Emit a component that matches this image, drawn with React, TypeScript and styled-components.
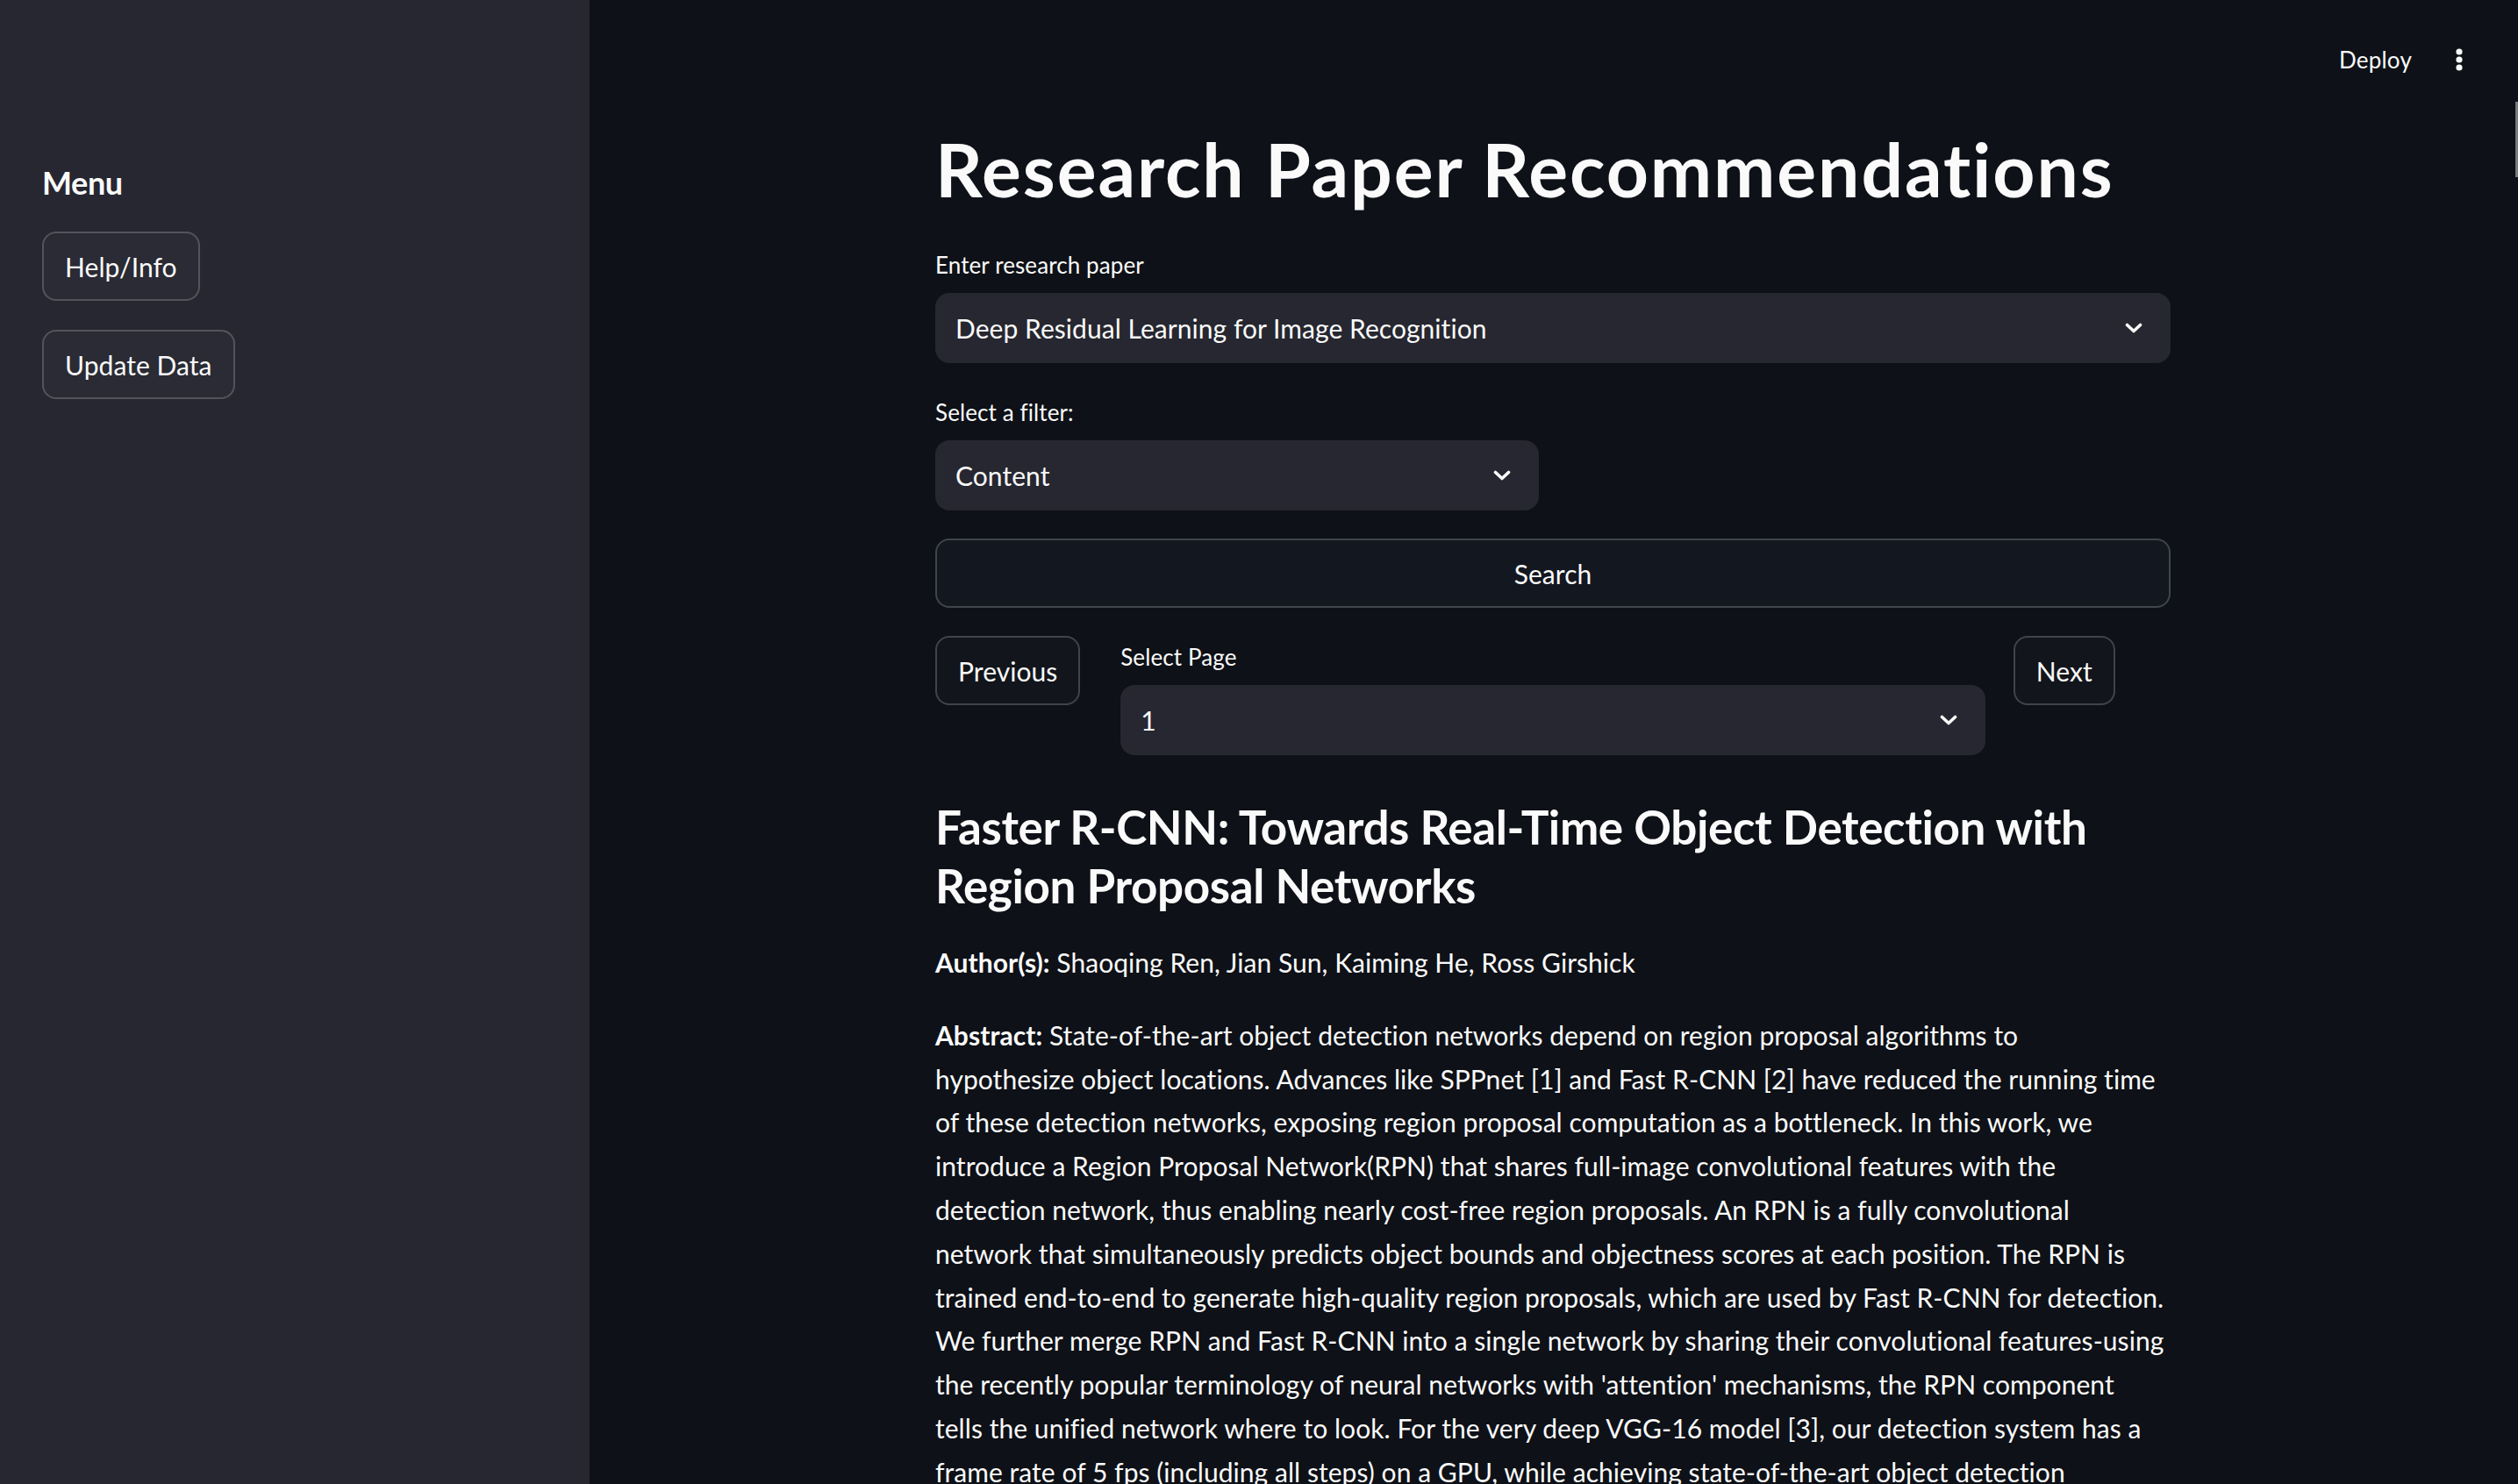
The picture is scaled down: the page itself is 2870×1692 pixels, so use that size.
import React from "react";
import styled, { createGlobalStyle } from "styled-components";

const GlobalStyle = createGlobalStyle`
  * { box-sizing: border-box; }
  html, body { margin: 0; padding: 0; background: #0e1117; }
  body {
    font-family: Lato, "Noto Sans", sans-serif;
    color: #fafafa;
    -webkit-font-smoothing: antialiased;
  }
`;

const abstractLines = [
  "hypothesize object locations. Advances like SPPnet [1] and Fast R-CNN [2] have reduced the running time",
  "of these detection networks, exposing region proposal computation as a bottleneck. In this work, we",
  "introduce a Region Proposal Network(RPN) that shares full-image convolutional features with the",
  "detection network, thus enabling nearly cost-free region proposals. An RPN is a fully convolutional",
  "network that simultaneously predicts object bounds and objectness scores at each position. The RPN is",
  "trained end-to-end to generate high-quality region proposals, which are used by Fast R-CNN for detection.",
  "We further merge RPN and Fast R-CNN into a single network by sharing their convolutional features-using",
  "the recently popular terminology of neural networks with 'attention' mechanisms, the RPN component",
  "tells the unified network where to look. For the very deep VGG-16 model [3], our detection system has a",
  "frame rate of 5 fps (including all steps) on a GPU, while achieving state-of-the-art object detection",
  "accuracy on PASCAL VOC 2007, 2012, and MS COCO datasets with only 300 proposals per image. In ILSVRC",
  "and COCO 2015 competitions, Faster R-CNN and RPN are the foundations of the 1st-place winning entries",
  "in several tracks. Code has been made publicly available.",
];

const Chevron = () => (
  <svg width="20" height="12" viewBox="0 0 20 12" fill="none">
    <polyline
      points="2.5,2.5 10,9.5 17.5,2.5"
      stroke="#fafafa"
      strokeWidth="3.6"
      strokeLinecap="round"
      strokeLinejoin="round"
    />
  </svg>
);

const MoreIcon = () => (
  <svg width="8" height="26" viewBox="0 0 8 26" fill="#fafafa">
    <circle cx="4" cy="4" r="3.6" />
    <circle cx="4" cy="13" r="3.6" />
    <circle cx="4" cy="22" r="3.6" />
  </svg>
);

type SelectProps = { label: string; value: string };

const SelectBox: React.FC<SelectProps> = ({ label, value }) => (
  <Field>
    <FieldLabel>{label}</FieldLabel>
    <Select>
      <span>{value}</span>
      <Chevron />
    </Select>
  </Field>
);

export default function App() {
  return (
    <>
      <GlobalStyle />
      <AppShell>
        <Sidebar>
          <SidebarTitle>Menu</SidebarTitle>
          <Button>Help/Info</Button>
          <Button>Update Data</Button>
        </Sidebar>

        <Main>
          <Header>
            <DeployButton>Deploy</DeployButton>
            <IconButton>
              <MoreIcon />
            </IconButton>
          </Header>

          <Content>
            <Title>Research Paper Recommendations</Title>

            <SelectBox label="Enter research paper" value="Deep Residual Learning for Image Recognition" />

            <Columns>
              <SelectBox label="Select a filter:" value="Content" />
              <div />
            </Columns>

            <Button $wide>Search</Button>

            <Pager>
              <Button>Previous</Button>
              <SelectBox label="Select Page" value="1" />
              <Button>Next</Button>
            </Pager>

            <Paper>
              <PaperTitle>
                Faster R-CNN: Towards Real-Time Object Detection with Region Proposal Networks
              </PaperTitle>
              <Text>
                <strong>Author(s):</strong> Shaoqing Ren, Jian Sun, Kaiming He, Ross Girshick
              </Text>
              <Text>
                <strong>Abstract:</strong> State-of-the-art object detection networks depend on region
                proposal algorithms to
                {abstractLines.map((line) => (
                  <React.Fragment key={line}>
                    <br />
                    {line}
                  </React.Fragment>
                ))}
              </Text>
            </Paper>
          </Content>
          <ScrollThumb />
        </Main>
      </AppShell>
    </>
  );
}

const AppShell = styled.div`
  display: flex;
  height: 100vh;
  overflow: hidden;
  background: #0e1117;
`;

const Sidebar = styled.aside`
  width: 672px;
  flex-shrink: 0;
  background: #262730;
  padding: 184px 48px 0;
  display: flex;
  flex-direction: column;
  align-items: flex-start;
  gap: 33px;
`;

const SidebarTitle = styled.h2`
  margin: 0 0 -1px;
  font-size: 36px;
  font-weight: 700;
  line-height: 48px;
  letter-spacing: -0.4px;
`;

const Button = styled.button<{ $wide?: boolean }>`
  display: inline-flex;
  align-items: center;
  justify-content: center;
  height: 79px;
  width: ${(p) => (p.$wide ? "100%" : "auto")};
  padding: 0 24px;
  border: 2px solid rgba(250, 250, 250, 0.2);
  border-radius: 16px;
  background: ${(p) => (p.$wide ? "#131720" : "rgba(250, 250, 250, 0.02)")};
  color: #fafafa;
  font-family: inherit;
  font-size: 30px;
  letter-spacing: 0.05px;
  cursor: pointer;
`;

const Main = styled.main`
  position: relative;
  flex: 1;
  padding-right: 2px;
`;

const Header = styled.header`
  height: 120px;
  display: flex;
  justify-content: flex-end;
  align-items: flex-start;
  padding: 48px 61px 0 0;
  gap: 50px;
`;

const DeployButton = styled.span`
  height: 40px;
  display: flex;
  align-items: center;
  font-size: 26px;
  letter-spacing: 0.2px;
`;

const IconButton = styled.span`
  height: 40px;
  display: flex;
  align-items: center;
`;

const Content = styled.div`
  width: 1408px;
  margin: 0 auto;
  padding-top: 22px;
  display: flex;
  flex-direction: column;
  gap: 32px;
`;

const Title = styled.h1`
  margin: 0 0 3px;
  font-size: 84px;
  font-weight: 700;
  line-height: 101px;
  letter-spacing: 1.9px;
`;

const Field = styled.div`
  display: flex;
  flex-direction: column;
`;

const FieldLabel = styled.label`
  height: 48px;
  margin-bottom: 8px;
  display: flex;
  align-items: center;
  font-size: 26px;
  letter-spacing: 0.1px;
`;

const Select = styled.div`
  height: 80px;
  display: flex;
  align-items: center;
  justify-content: space-between;
  padding: 0 32px 0 23px;
  background: #262730;
  border-radius: 16px;
  font-size: 30px;
  letter-spacing: 0.05px;
`;

const Columns = styled.div`
  display: grid;
  grid-template-columns: 1fr 1fr;
  gap: 32px;
`;

const Pager = styled.div`
  display: grid;
  grid-template-columns: 2fr 11fr 2fr;
  gap: 32px;
  align-items: start;

  & > button {
    justify-self: start;
  }
`;

const Paper = styled.section`
  display: flex;
  flex-direction: column;
`;

const PaperTitle = styled.h3`
  margin: 16px 0 30px;
  font-size: 53px;
  font-weight: 700;
  line-height: 67px;
  letter-spacing: -0.4px;
`;

const Text = styled.p`
  margin: 0 0 33px;
  font-size: 30px;
  line-height: 49.8px;
  letter-spacing: 0.05px;

  strong {
    font-weight: 700;
  }
`;

const ScrollThumb = styled.div`
  position: absolute;
  top: 116px;
  right: 0;
  width: 3px;
  height: 86px;
  background: #7b7c80;
`;
